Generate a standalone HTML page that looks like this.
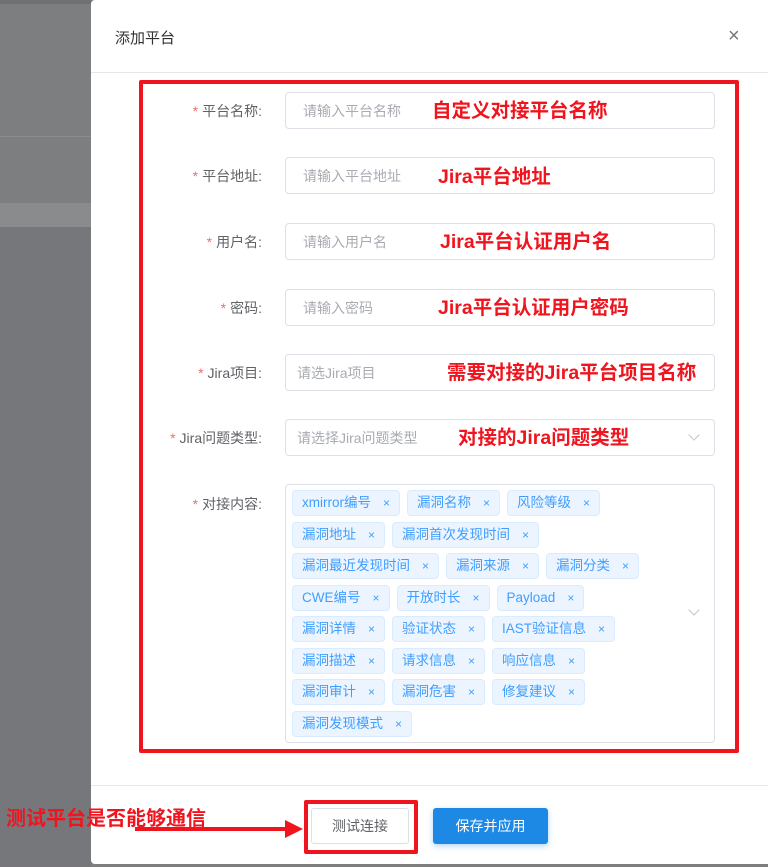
<!DOCTYPE html>
<html><head><meta charset="utf-8"><style>
*{box-sizing:border-box;margin:0;padding:0}
body{width:768px;height:867px;position:relative;overflow:hidden;background:#7d7e80;font-family:"Liberation Sans","Noto Sans CJK SC",sans-serif}
.abs{position:absolute}
.modal{left:91px;top:0;width:680px;height:864px;background:#fff;border-radius:4px}
.lbl{position:absolute;right:506px;font-size:14px;color:#606266;text-align:right;width:150px}
.lbl b{color:#f56c6c;font-weight:normal;margin-right:4px}
.inp{position:absolute;left:285px;width:430px;height:37px;border:1px solid #dcdfe6;border-radius:4px;font-size:14px;color:#a8abb2;padding-left:17px;line-height:36px}
.ann{position:absolute;color:#f0141e;font-weight:bold;font-size:19.5px}
.tags{position:absolute;left:285px;top:484px;width:430px;height:259px;border:1px solid #dcdfe6;border-radius:4px;padding:3px 0 0 4px}
.tag{display:inline-block;height:26px;line-height:24px;margin:2px 5px 3.5px 2px;padding:0 9px;background:#ecf5ff;border:1px solid #d9ecff;color:#409eff;font-size:13.5px;border-radius:4px;white-space:nowrap}
.tag i{font-style:normal;margin-left:12px;font-size:12px}
</style></head><body>
<div class="abs" style="left:0;top:0;width:91px;height:4px;background:#6f7072"></div>
<div class="abs" style="left:0;top:136px;width:91px;height:1px;background:#8a8b8d"></div>
<div class="abs" style="left:0;top:203px;width:91px;height:24px;background:#8a8b8d"></div>
<div class="abs" style="left:0;top:227px;width:91px;height:640px;background:#76777a"></div>
<div class="abs modal"></div>
<div class="abs" style="left:115px;top:27px;font-size:15px;color:#303133">添加平台</div>
<div class="abs" style="left:728px;top:25px;font-size:20px;color:#777;font-weight:300">×</div>
<div class="abs" style="left:91px;top:72px;width:677px;height:1px;background:#e6e6e6"></div>
<div class="abs" style="left:139px;top:80px;width:600px;height:673px;border:4px solid #f0141e;border-radius:2px"></div>

<div class="lbl" style="top:101px"><b>*</b>平台名称:</div>
<div class="inp" style="top:92px">请输入平台名称</div>
<div class="ann" style="left:432px;top:94px">自定义对接平台名称</div>

<div class="lbl" style="top:166px"><b>*</b>平台地址:</div>
<div class="inp" style="top:157px">请输入平台地址</div>
<div class="ann" style="left:438px;top:160px">Jira平台地址</div>

<div class="lbl" style="top:232px"><b>*</b>用户名:</div>
<div class="inp" style="top:223px">请输入用户名</div>
<div class="ann" style="left:440px;top:225px">Jira平台认证用户名</div>

<div class="lbl" style="top:298px"><b>*</b>密码:</div>
<div class="inp" style="top:289px">请输入密码</div>
<div class="ann" style="left:438px;top:291px">Jira平台认证用户密码</div>

<div class="lbl" style="top:363px"><b>*</b>Jira项目:</div>
<div class="inp" style="top:354px;padding-left:11px">请选Jira项目</div>
<div class="ann" style="left:447px;top:356px">需要对接的Jira平台项目名称</div>

<div class="lbl" style="top:428px"><b>*</b>Jira问题类型:</div>
<div class="inp" style="top:419px;padding-left:11px">请选择Jira问题类型</div>
<div class="ann" style="left:458px;top:421px">对接的Jira问题类型</div>
<div class="abs" style="left:690px;top:431px;width:8px;height:8px;border-right:1px solid #c0c4cc;border-bottom:1px solid #c0c4cc;transform:rotate(45deg)"></div>

<div class="lbl" style="top:494px"><b>*</b>对接内容:</div>
<div class="tags">
<span class="tag">xmirror编号<i>×</i></span><span class="tag">漏洞名称<i>×</i></span><span class="tag">风险等级<i>×</i></span><br>
<span class="tag">漏洞地址<i>×</i></span><span class="tag">漏洞首次发现时间<i>×</i></span><br>
<span class="tag">漏洞最近发现时间<i>×</i></span><span class="tag">漏洞来源<i>×</i></span><span class="tag">漏洞分类<i>×</i></span><br>
<span class="tag">CWE编号<i>×</i></span><span class="tag">开放时长<i>×</i></span><span class="tag">Payload<i>×</i></span><br>
<span class="tag">漏洞详情<i>×</i></span><span class="tag">验证状态<i>×</i></span><span class="tag">IAST验证信息<i>×</i></span><br>
<span class="tag">漏洞描述<i>×</i></span><span class="tag">请求信息<i>×</i></span><span class="tag">响应信息<i>×</i></span><br>
<span class="tag">漏洞审计<i>×</i></span><span class="tag">漏洞危害<i>×</i></span><span class="tag">修复建议<i>×</i></span><br>
<span class="tag">漏洞发现模式<i>×</i></span>
</div>
<div class="abs" style="left:690px;top:606px;width:8px;height:8px;border-right:1px solid #c0c4cc;border-bottom:1px solid #c0c4cc;transform:rotate(45deg)"></div>

<div class="abs" style="left:91px;top:785px;width:677px;height:1px;background:#e6e6e6"></div>
<div class="abs" style="left:304px;top:800px;width:114px;height:54px;border:4px solid #f0141e;border-radius:2px"></div>
<div class="abs" style="left:311px;top:808px;width:98px;height:36px;border:1px solid #dcdfe6;border-radius:3px;font-size:14px;color:#606266;text-align:center;line-height:34px">测试连接</div>
<div class="abs" style="left:433px;top:808px;width:115px;height:36px;background:#1e88e5;border-radius:3px;font-size:14px;color:#fff;text-align:center;line-height:36px;box-shadow:0 2px 6px rgba(30,136,229,.35)">保存并应用</div>
<div class="abs" style="left:6px;top:802px;font-size:20px;font-weight:bold;color:#f0141e">测试平台是否能够通信</div>
<div class="abs" style="left:135px;top:827px;width:152px;height:4px;background:#f0141e"></div>
<div class="abs" style="left:285px;top:820px;width:0;height:0;border-left:18px solid #f0141e;border-top:9px solid transparent;border-bottom:9px solid transparent"></div>
</body></html>
